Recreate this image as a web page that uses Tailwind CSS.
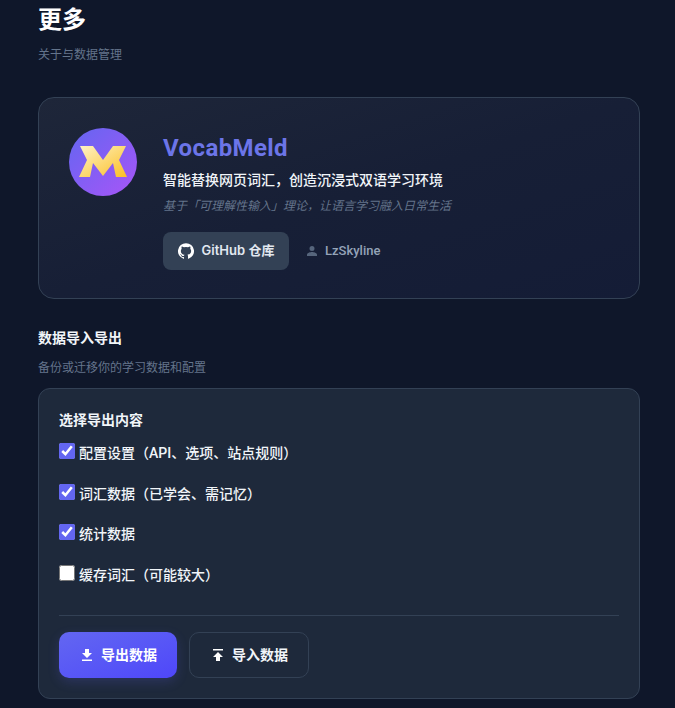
<!DOCTYPE html>
<html lang="zh-CN">
<head>
  <meta charset="UTF-8">
  <title>VocabMeld - 更多</title>
  <script src="https://cdn.jsdelivr.net/npm/@tailwindcss/browser@4"></script>
</head>
<body class="bg-[#0f172a] text-white h-[708px] overflow-hidden font-['Roboto','Noto_Sans_CJK_SC',sans-serif]">
  <main class="w-[602px] ml-[38px] -mt-[2px]">
    <h1 class="text-2xl font-bold leading-[44px] h-[44px]">更多</h1>
    <p class="text-xs text-[#64748b] mt-[4px] leading-[18px]">关于与数据管理</p>

    <!-- about card -->
    <section class="mt-[33px] h-[202px] rounded-2xl border border-[#334155] bg-gradient-to-br from-[#1e2639] via-[#171f36] to-[#141c36] pl-[30px] pt-[30px] flex gap-[26px]">
      <svg class="w-[68px] h-[68px] shrink-0" viewBox="0 0 68 68">
        <defs>
          <linearGradient id="bg" x1="0" y1="0" x2="1" y2="1">
            <stop offset="0" stop-color="#6366f1"/>
            <stop offset="1" stop-color="#a855f7"/>
          </linearGradient>
          <linearGradient id="m" x1="0" y1="0" x2="1" y2="1">
            <stop offset="0" stop-color="#fef3c7"/>
            <stop offset="1" stop-color="#fbbf24"/>
          </linearGradient>
        </defs>
        <circle cx="34" cy="34" r="34" fill="url(#bg)"/>
        <path d="M11 18H24L34 32 44 18H57L50 32 58 49H47L44 35 34 48 24 35 21 49H10L18 32Z" fill="url(#m)"/>
      </svg>
      <div class="pt-[4px]">
        <h2 class="text-[24px] font-bold leading-[32px] tracking-[0.4px] text-[#6c75e8]">VocabMeld</h2>
        <p class="text-sm font-medium mt-[6px] leading-[20px] text-[#f1f5f9]">智能替换网页词汇，创造沉浸式双语学习环境</p>
        <p class="text-xs italic text-[#64748b] mt-[8px] leading-[16px]">基于「可理解性输入」理论，让语言学习融入日常生活</p>
        <div class="flex items-center mt-[18px]">
          <a class="h-[38px] w-[126px] rounded-lg bg-[#334155] flex items-center justify-center gap-[8px] text-[13px] font-semibold text-[#e2e8f0] font-['Inter','Noto_Sans_CJK_SC',sans-serif]">
            <svg class="w-[16px] h-[16px]" viewBox="0 0 24 24" fill="#fff"><path d="M12 .3a12 12 0 0 0-3.8 23.4c.6.1.8-.3.8-.6v-2c-3.3.7-4-1.6-4-1.6-.6-1.4-1.4-1.8-1.4-1.8-1-.7.1-.7.1-.7 1.2.1 1.8 1.2 1.8 1.2 1 1.8 2.8 1.3 3.5 1 .1-.8.4-1.3.8-1.6-2.7-.3-5.5-1.3-5.5-6 0-1.2.5-2.3 1.3-3.1-.2-.4-.6-1.6 0-3.2 0 0 1-.3 3.4 1.2a11.5 11.5 0 0 1 6 0c2.3-1.5 3.3-1.2 3.3-1.2.7 1.6.3 2.8.1 3.2.8.8 1.3 1.9 1.3 3.2 0 4.6-2.8 5.6-5.5 5.9.4.4.8 1.1.8 2.2v3.3c0 .3.2.7.8.6A12 12 0 0 0 12 .3"/></svg>
            GitHub 仓库
          </a>
          <svg class="w-[12px] h-[12px] ml-[17px]" viewBox="0 0 24 24" fill="#56657c"><path d="M12 12a5 5 0 1 0 0-10 5 5 0 0 0 0 10zm0 2c-3.3 0-10 1.7-10 5v3h20v-3c0-3.3-6.7-5-10-5z"/></svg>
          <span class="text-[13px] font-medium text-[#94a3b8] ml-[7px]">LzSkyline</span>
        </div>
      </div>
    </section>

    <!-- import / export -->
    <h3 class="text-sm font-semibold text-[#f1f5f9] mt-[29px] leading-[20px]">数据导入导出</h3>
    <p class="text-xs text-[#64748b] mt-[11px] leading-[18px]">备份或迁移你的学习数据和配置</p>

    <section class="mt-[11px] h-[311px] rounded-xl border border-[#334155] bg-[#1e293b] px-[20px] pt-[21px]">
      <h4 class="text-sm font-semibold leading-[20px] text-[#f1f5f9]">选择导出内容</h4>
      <div class="mt-[13px] flex flex-col gap-[20.6px]">
        <label class="flex items-start gap-[4px] h-[20px] text-sm font-medium text-[#f1f5f9]">
          <input type="checkbox" checked class="w-4 h-4 accent-[#6366f1]"><span class="leading-[20px]">配置设置（API、选项、站点规则）</span>
        </label>
        <label class="flex items-start gap-[4px] h-[20px] text-sm font-medium text-[#f1f5f9]">
          <input type="checkbox" checked class="w-4 h-4 accent-[#6366f1]"><span class="leading-[20px]">词汇数据（已学会、需记忆）</span>
        </label>
        <label class="flex items-start gap-[4px] h-[20px] text-sm font-medium text-[#f1f5f9]">
          <input type="checkbox" checked class="w-4 h-4 accent-[#6366f1]"><span class="leading-[20px]">统计数据</span>
        </label>
        <label class="flex items-start gap-[4px] h-[20px] text-sm font-medium text-[#f1f5f9]">
          <input type="checkbox" class="w-4 h-4 accent-[#6366f1]"><span class="leading-[20px]">缓存词汇（可能较大）</span>
        </label>
      </div>
      <div class="border-t border-[#334155] mt-[30px] pt-[16px] flex gap-[12px]">
        <button class="w-[118px] h-[46px] rounded-[10px] bg-gradient-to-br from-[#6366f1] to-[#4f46fa] shadow-[0_4px_12px_rgba(99,102,241,0.2)] flex items-center pl-[22px] gap-[8px] text-sm font-semibold">
          <svg class="w-[12px] h-[12px]" viewBox="0 0 12 12" fill="#fff"><path d="M4 0h4v4h3L6 9 1 4h3zM1 10.5h10V12H1z"/></svg>
          导出数据
        </button>
        <button class="w-[120px] h-[46px] rounded-[10px] border border-[#334155] flex items-center pl-[22px] gap-[8px] text-sm font-semibold text-[#f1f5f9]">
          <svg class="w-[12px] h-[12px]" viewBox="0 0 12 12" fill="#fff"><path d="M1 0h10v1.5H1zM6 3l5 5H8v4H4V8H1z"/></svg>
          导入数据
        </button>
      </div>
    </section>
  </main>
</body>
</html>
